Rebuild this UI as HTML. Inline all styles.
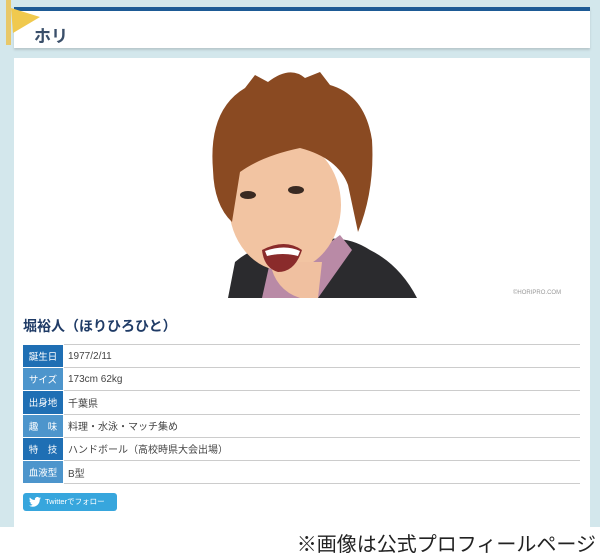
<!DOCTYPE html>
<html><head><meta charset="utf-8"><style>
*{margin:0;padding:0;box-sizing:border-box}
body{width:600px;height:552px;background:#fff;font-family:"Liberation Sans","Noto Sans CJK JP",sans-serif;position:relative;overflow:hidden}
.bg{position:absolute;left:0;top:0;width:600px;height:527px;background:#d3e7ec}
.hdr{position:absolute;left:14px;top:7px;width:576px;height:41px;background:#fff;border-top:4px solid #1d5a95;box-shadow:0 2px 2px #b8c8cc}
.hdr span{position:absolute;left:20px;top:11px;font-size:17px;font-weight:bold;color:#3a4f6a}
.card{position:absolute;left:14px;top:58px;width:576px;height:469px;background:#fff}
.name{position:absolute;left:23px;top:316px;font-size:14px;font-weight:bold;color:#1f3b66}
table{position:absolute;left:22px;top:344px;width:558px;border-collapse:collapse;font-size:10px}
td{height:23.2px;border-top:1px solid #ccc;border-bottom:1px solid #ccc;color:#444;padding-left:4px}
td.l{width:41px;background:#1f6fb4;color:#fff;padding:0;text-align:center;font-size:9.5px;border:1px solid #fff}
tr:nth-child(even) td.l{background:#4d95cc}
.tw{position:absolute;left:23px;top:493px;width:94px;height:18px;background:#37a6dd;border-radius:3px;color:#fff;font-size:7.5px;line-height:18px;padding-left:22px}
.cap{position:absolute;right:4px;top:528px;font-size:20px;color:#222;white-space:nowrap}
.copy{position:absolute;left:513px;top:290px;font-size:6px;color:#999}
</style></head><body>
<div class="bg"></div>
<div class="hdr"><span>ホリ</span></div>
<svg style="position:absolute;left:0;top:0" width="45" height="50"><rect x="6" y="0" width="5" height="45" fill="#e8c86a"/><polygon points="11,8 40,17 13,33" fill="#f0c94e"/></svg>
<div class="card"></div>
<svg style="position:absolute;left:205px;top:68px" width="220" height="232" viewBox="205 68 220 232">
<path d="M228,298 L235,262 Q260,240 300,245 Q340,230 370,250 Q400,265 417,298 Z" fill="#2b2b2e"/>
<path d="M262,298 L270,262 L300,265 L340,235 L352,250 L318,298 Z" fill="#b98aa6"/>
<ellipse cx="285" cy="205" rx="56" ry="66" fill="#f2c4a2"/>
<path d="M270,262 Q275,290 300,298 L318,298 L322,262 Z" fill="#f0c0a0"/>
<path d="M213,170 Q208,110 245,88 L255,75 L268,82 Q290,65 305,78 L320,72 L330,85 Q365,95 372,140 Q375,190 358,232 L348,185 Q338,158 300,148 Q262,156 240,172 L232,222 Q214,205 213,170 Z" fill="#8a4a22"/>
<ellipse cx="248" cy="195" rx="8" ry="4" fill="#3a2a22"/><ellipse cx="296" cy="190" rx="8" ry="4" fill="#3a2a22"/>
<path d="M262,250 Q285,238 302,250 Q295,272 278,272 Q264,268 262,250 Z" fill="#8a2b2b"/>
<path d="M265,251 Q285,244 300,251 L298,256 Q283,252 267,256 Z" fill="#fff"/>
</svg>
<div class="copy">©HORIPRO.COM</div>
<div class="name">堀裕人（ほりひろひと）</div>
<table>
<tr><td class="l">誕生日</td><td>1977/2/11</td></tr>
<tr><td class="l">サイズ</td><td>173cm 62kg</td></tr>
<tr><td class="l">出身地</td><td>千葉県</td></tr>
<tr><td class="l">趣　味</td><td>料理・水泳・マッチ集め</td></tr>
<tr><td class="l">特　技</td><td>ハンドボール（高校時県大会出場）</td></tr>
<tr><td class="l">血液型</td><td>B型</td></tr>
</table>
<div class="tw"><svg style="position:absolute;left:6px;top:4px" width="12" height="10" viewBox="0 0 24 20"><path d="M24 2.4a10 10 0 0 1-2.8.8A5 5 0 0 0 23.3.4a10 10 0 0 1-3.1 1.2A4.9 4.9 0 0 0 11.8 6 14 14 0 0 1 1.7.9a4.9 4.9 0 0 0 1.5 6.6A5 5 0 0 1 1 6.9a4.9 4.9 0 0 0 3.9 4.8 5 5 0 0 1-2.2.1 4.9 4.9 0 0 0 4.6 3.4A9.9 9.9 0 0 1 0 17.3 14 14 0 0 0 7.5 19.5c9.1 0 14-7.5 14-14v-.6A10 10 0 0 0 24 2.4z" fill="#fff"/></svg>Twitterでフォロー</div>
<div class="cap">※画像は公式プロフィールページ</div>
</body></html>
